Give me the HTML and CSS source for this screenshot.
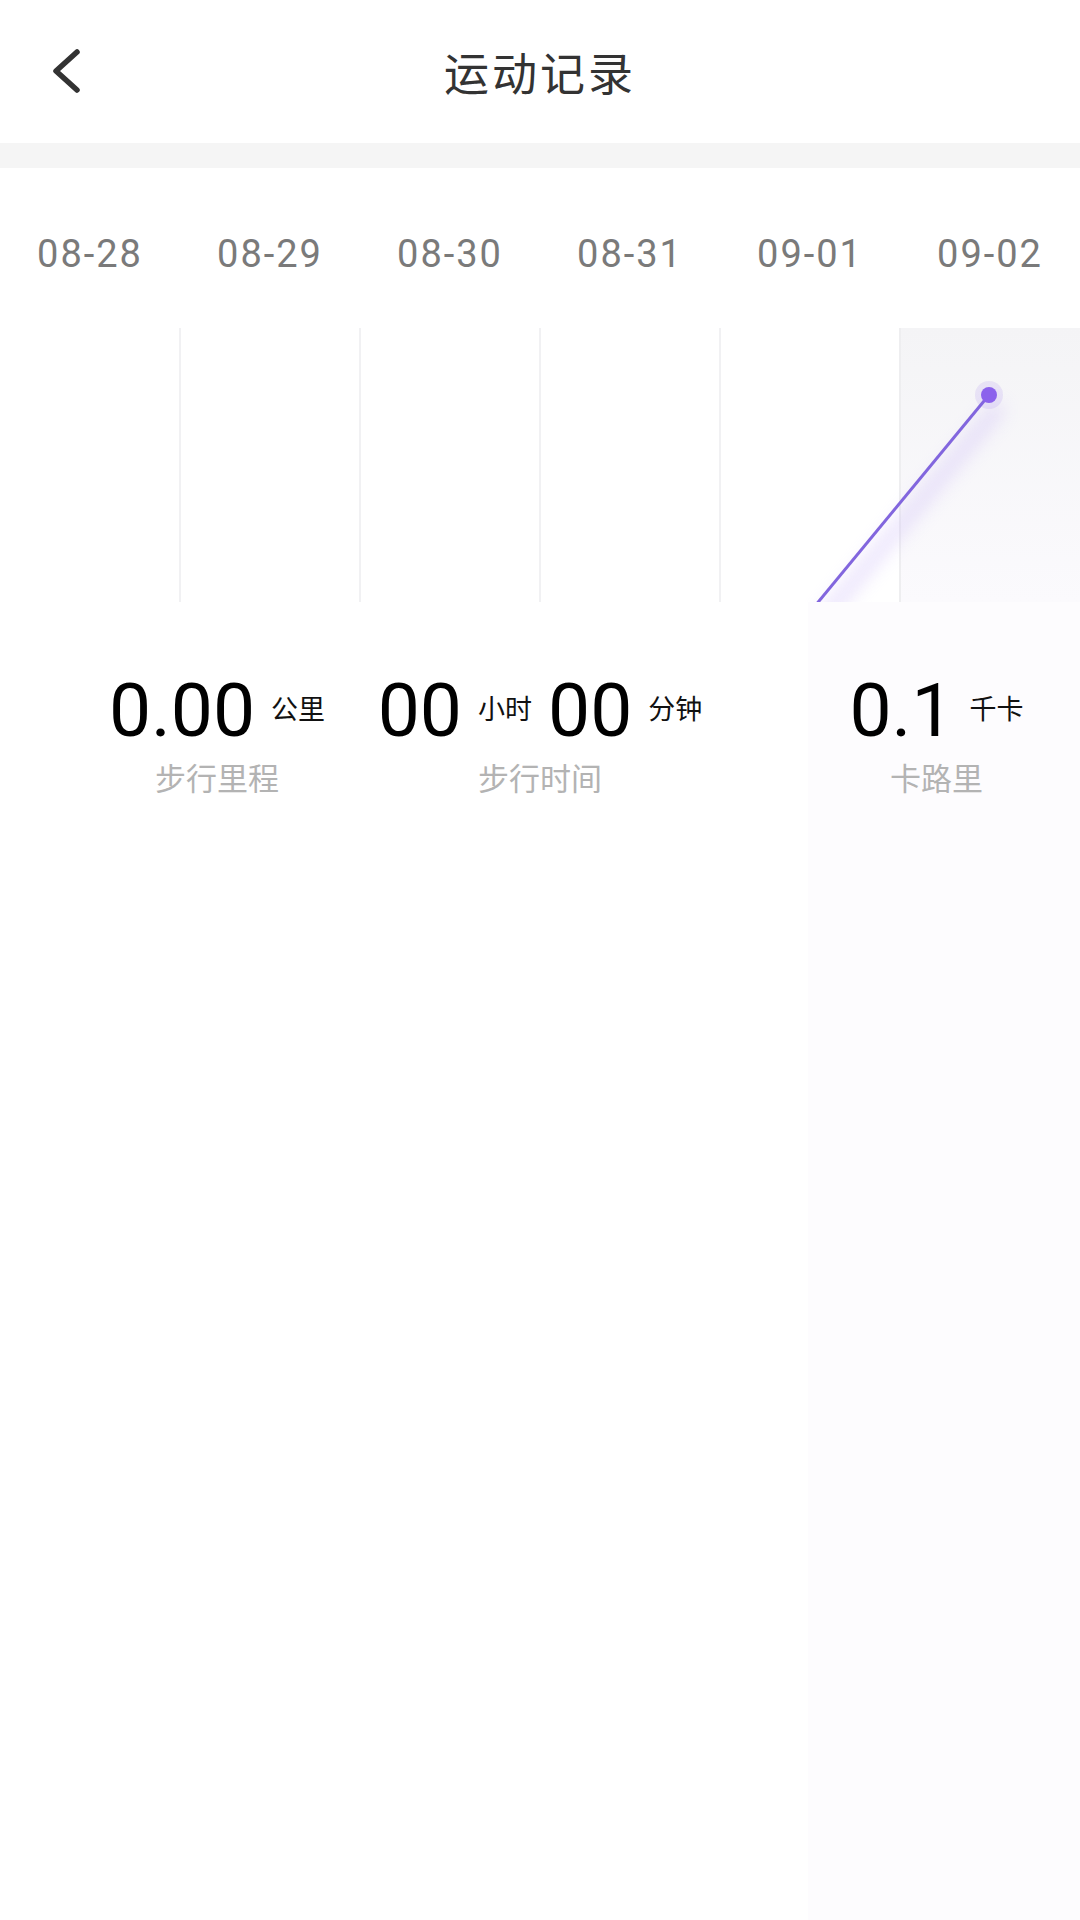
FILE: index.html
```html
<!DOCTYPE html>
<html lang="zh-CN">
<head>
    <meta charset="UTF-8">
    <meta name="viewport" content="width=device-width, initial-scale=1.0">
    <title>运动记录</title>
    <link rel="stylesheet" href="styles.css">
</head>
<body>
    <div class="page">
        <header class="topbar">
            <a class="back" href="#">
                <svg width="40" height="50" viewBox="0 0 40 50">
                    <polyline points="30,4 9,23 30,42" fill="none" stroke="#333" stroke-width="5.5" stroke-linecap="round" stroke-linejoin="round"/>
                </svg>
            </a>
            <h1 class="title">运动记录</h1>
            <span></span>
        </header>

        <div class="divider"></div>

        <div class="dates">
            <span>08-28</span>
            <span>08-29</span>
            <span>08-30</span>
            <span>08-31</span>
            <span>09-01</span>
            <span>09-02</span>
        </div>

        <!-- 每日步数折线图 -->
        <svg class="chart" width="1080" height="274" viewBox="0 0 1080 274">
            <defs>
                <linearGradient id="colBg" x1="0" y1="0" x2="0" y2="1">
                    <stop offset="0" stop-color="#f4f4f6"/>
                    <stop offset="1" stop-color="#fbfafd"/>
                </linearGradient>
                <filter id="glow" x="-50%" y="-50%" width="200%" height="200%">
                    <feGaussianBlur stdDeviation="9"/>
                </filter>
            </defs>
            <rect x="899" y="0" width="181" height="274" fill="url(#colBg)"/>
            <line x1="180" y1="0" x2="180" y2="274" stroke="#f1f1f3" stroke-width="2"/>
            <line x1="360" y1="0" x2="360" y2="274" stroke="#f1f1f3" stroke-width="2"/>
            <line x1="540" y1="0" x2="540" y2="274" stroke="#f1f1f3" stroke-width="2"/>
            <line x1="720" y1="0" x2="720" y2="274" stroke="#f1f1f3" stroke-width="2"/>
            <line x1="900" y1="0" x2="900" y2="274" stroke="#eeeef0" stroke-width="2"/>
            <line x1="822" y1="292" x2="1000" y2="78" stroke="#c7b3f7" stroke-width="14" opacity="0.4" filter="url(#glow)"/>
            <line x1="810" y1="284" x2="989" y2="67" stroke="#8266de" stroke-width="3"/>
            <circle cx="989" cy="67" r="14" fill="#8b66e8" opacity="0.13"/>
            <circle cx="989" cy="67" r="8" fill="#8b62ec"/>
        </svg>

        <div class="content">
            <div class="stats">
                <div class="stat stat-distance">
                    <div class="value"><span class="num">0.00</span><span class="unit">公里</span></div>
                    <div class="label">步行里程</div>
                </div>
                <div class="stat stat-time">
                    <div class="value"><span class="num">00</span><span class="unit">小时</span><span class="num">00</span><span class="unit">分钟</span></div>
                    <div class="label">步行时间</div>
                </div>
                <div class="stat stat-calorie">
                    <div class="value"><span class="num">0.1</span><span class="unit">千卡</span></div>
                    <div class="label">卡路里</div>
                </div>
            </div>
        </div>
    </div>
</body>
</html>
```

FILE: styles.css
```css
body {
    margin: 0;
    background-color: #fff;
    font-family: Roboto, "Noto Sans CJK SC", sans-serif;
}
.page {
    min-height: 100vh;
    display: flex;
    flex-direction: column;
}
.topbar {
    height: 143px;
    display: grid;
    grid-template-columns: 1fr auto 1fr;
    align-items: center;
}
.back {
    display: block;
    width: 40px;
    height: 50px;
    margin-left: 47px;
    margin-top: 3px;
}
.back svg {
    display: block;
}
.title {
    margin: 0;
    font-size: 45px;
    font-weight: normal;
    letter-spacing: 3px;
    color: #333;
    font-family: "Noto Sans CJK SC", sans-serif;
}
.divider {
    height: 25px;
    background-color: #f5f5f5;
}
.dates {
    height: 160px;
    box-sizing: border-box;
    padding-top: 61px;
    display: grid;
    grid-template-columns: repeat(6, 180px);
    align-items: start;
}
.dates span {
    text-align: center;
    font-size: 38px;
    line-height: 50px;
    letter-spacing: 2px;
    color: #7a7a7a;
}
.chart {
    display: block;
}
.content {
    flex: 1;
    background: linear-gradient(90deg, #fff 808px, #fdfcfe 808px);
}
.stats {
    display: grid;
    grid-template-columns: 375px 330px 375px;
    padding-top: 63px;
}
.stat {
    display: flex;
    flex-direction: column;
    align-items: center;
}
.stat-distance {
    padding-left: 59px;
}
.stat-calorie {
    padding-left: 88px;
}
.value {
    display: flex;
    align-items: center;
    gap: 16px;
    height: 90px;
    white-space: nowrap;
}
.num {
    font-size: 75px;
    line-height: 90px;
    color: #000;
}
.unit {
    font-family: "Noto Sans CJK SC", sans-serif;
    font-size: 27px;
    color: #111;
    margin-bottom: 6px;
}
.label {
    font-family: "Noto Sans CJK SC", sans-serif;
    font-size: 31px;
    line-height: 44px;
    color: #b3b3b3;
}
```
